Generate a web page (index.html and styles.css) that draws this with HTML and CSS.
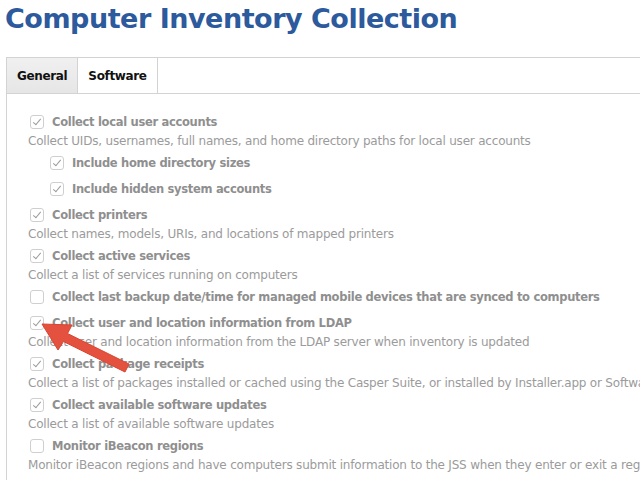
FILE: index.html
```html
<!DOCTYPE html>
<html lang="en">

<head>
    <meta charset="UTF-8">
    <title>Computer Inventory Collection</title>
    <link rel="stylesheet" href="styles.css">
</head>

<body>

    <h1 class="page-title">Computer Inventory Collection</h1>

    <div class="tabs">
        <div class="tab active">General</div>
        <div class="tab">Software</div>
    </div>

    <div class="panel">
        <div class="option">
            <div class="option-label"><span class="check on"></span>Collect local user accounts</div>
            <div class="option-desc">Collect UIDs, usernames, full names, and home directory paths for local user accounts</div>
        </div>
        <div class="option sub">
            <div class="option-label"><span class="check on"></span>Include home directory sizes</div>
        </div>
        <div class="option sub">
            <div class="option-label"><span class="check on"></span>Include hidden system accounts</div>
        </div>
        <div class="option">
            <div class="option-label"><span class="check on"></span>Collect printers</div>
            <div class="option-desc">Collect names, models, URIs, and locations of mapped printers</div>
        </div>
        <div class="option">
            <div class="option-label"><span class="check on"></span>Collect active services</div>
            <div class="option-desc">Collect a list of services running on computers</div>
        </div>
        <div class="option">
            <div class="option-label"><span class="check"></span>Collect last backup date/time for managed mobile devices that are synced to computers</div>
        </div>
        <div class="option">
            <div class="option-label"><span class="check on"></span>Collect user and location information from LDAP</div>
            <div class="option-desc">Collect user and location information from the LDAP server when inventory is updated</div>
        </div>
        <div class="option">
            <div class="option-label"><span class="check on"></span>Collect package receipts</div>
            <div class="option-desc">Collect a list of packages installed or cached using the Casper Suite, or installed by Installer.app or Software Update</div>
        </div>
        <div class="option">
            <div class="option-label"><span class="check on"></span>Collect available software updates</div>
            <div class="option-desc">Collect a list of available software updates</div>
        </div>
        <div class="option">
            <div class="option-label"><span class="check"></span>Monitor iBeacon regions</div>
            <div class="option-desc">Monitor iBeacon regions and have computers submit information to the JSS when they enter or exit a region</div>
        </div>
    </div>

    <!-- callout arrow pointing at the LDAP checkbox -->
    <svg class="callout" width="640" height="480" viewBox="0 0 640 480">
        <polygon points="42,324 72,325 67.5,333.5 129,364 125,372 63.5,341.5 58,350" fill="#e5513f" stroke="#d8442f" stroke-width="1" stroke-linejoin="round"/>
    </svg>

</body>

</html>
```

FILE: styles.css
```css
html,
body {
    margin: 0;
    overflow: hidden;
}

body {
    padding: 0 0 0 6px;
    width: 760px;
    height: 480px;
    font-family: "DejaVu Sans", Verdana, sans-serif;
    background: #fff;
    white-space: nowrap;
}

.page-title {
    margin: 0 0 19px -1px;
    font-size: 27px;
    line-height: 38px;
    color: #2c5a9c;
    letter-spacing: -0.48px;
}

.tabs {
    display: flex;
    height: 35px;
    border: 1px solid #d3d3d3;
    border-right: none;
}

.tab {
    padding: 0 10px;
    font-size: 12px;
    font-weight: bold;
    line-height: 36px;
    letter-spacing: -0.35px;
    color: #111;
    border-right: 1px solid #d3d3d3;
}

.tab.active {
    background: linear-gradient(#f0f0f0, #e6e6e6);
}

.panel {
    border-left: 1px solid #d3d3d3;
    padding: 17px 0 0 21px;
    height: 380px;
}

.option {
    margin-bottom: 5px;
}

.option-label {
    display: flex;
    align-items: center;
    height: 21px;
    padding-left: 2px;
    font-size: 11.5px;
    font-weight: bold;
    letter-spacing: -0.3px;
    color: #8f8f8f;
}

.sub .option-label {
    padding-left: 22px;
}

.option-desc {
    height: 15px;
    font-size: 12px;
    line-height: 18px;
    letter-spacing: -0.2px;
    color: #9b9b9b;
}

.check {
    position: relative;
    width: 12px;
    height: 12px;
    margin-right: 8px;
    border: 1px solid #cfcfcf;
    border-radius: 3px;
    background: #fff;
    flex: none;
}

.check.on::after {
    content: "";
    position: absolute;
    left: 4px;
    top: 1px;
    width: 3px;
    height: 7px;
    border-right: 1px solid #9a9a9a;
    border-bottom: 1px solid #9a9a9a;
    transform: rotate(40deg);
}

.callout {
    position: absolute;
    left: 0;
    top: 0;
}
```
